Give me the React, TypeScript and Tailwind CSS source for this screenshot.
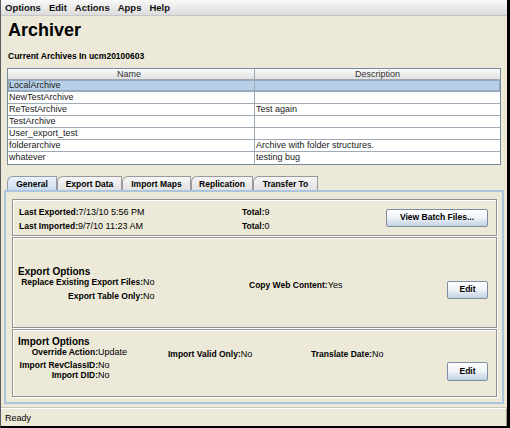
export default function App() {
  const rows: [string, string][] = [
    ["LocalArchive", ""],
    ["NewTestArchive", ""],
    ["ReTestArchive", "Test again"],
    ["TestArchive", ""],
    ["User_export_test", ""],
    ["folderarchive", "Archive with folder structures."],
    ["whatever", "testing bug"],
  ];
  const tabs: { label: string; w: string; active?: boolean }[] = [
    { label: "General", w: "w-[50px]", active: true },
    { label: "Export Data", w: "w-[65px]" },
    { label: "Import Maps", w: "w-[69px]" },
    { label: "Replication", w: "w-[62px]" },
    { label: "Transfer To", w: "w-[65px]" },
  ];
  const btn =
    "flex items-center justify-center border border-[#7d8da3] rounded-[2px] bg-linear-to-b from-white via-[#eef2f8] to-[#c3d1e4] text-[8.5px] font-bold leading-none text-black";
  const lbl = "font-bold text-[8.5px]";
  const val = "text-[9px]";

  return (
    <div className="w-[510px] h-[428px] bg-[#ece9d8] border-l border-l-[#5a5a5a] border-r-[3px] border-r-black border-b-2 border-b-black flex flex-col font-['Liberation_Sans',Arial,sans-serif] text-black overflow-hidden">
      {/* Menu bar */}
      <div className="h-[16px] shrink-0 border-b border-[#c6c6c6] bg-linear-to-b from-[#f9f9f9] to-[#dcdcdc] flex items-center gap-[8px] pl-[4px] text-[9.5px] font-bold leading-[15px] text-[#111]">
        <span>Options</span>
        <span>Edit</span>
        <span>Actions</span>
        <span>Apps</span>
        <span>Help</span>
      </div>

      {/* Title */}
      <div className="mt-[4.5px] ml-[7px] text-[18px] font-bold leading-[18px]">Archiver</div>
      <div className="mt-[12.5px] ml-[7px] text-[8.5px] font-bold leading-[10px]">
        Current Archives In ucm20100603
      </div>

      {/* Table */}
      <div className="mt-[7px] ml-[6px] w-[494px] border border-[#7a8a9c] bg-white shrink-0">
        <div className="flex h-[11px] border-b border-[#9ea9b6] bg-linear-to-b from-[#fbfbfb] to-[#e1e1e1] text-[9px] leading-[10px] text-[#333]">
          <div className="w-[247px] border-r border-[#9ea9b6] text-center pr-[4px]">Name</div>
          <div className="flex-1 text-center">Description</div>
        </div>
        {rows.map(([n, d], i) => (
          <div
            key={n}
            className={
              "flex h-[12px] text-[9px] leading-[11px] text-[#1a1a1a] " +
              (i < rows.length - 1 ? "border-b border-[#9ea9b6] " : "") +
              (i === 0 ? "bg-[#b8cfe6] shadow-[inset_0_0_0_1px_#8fa9c6]" : "")
            }
          >
            <div className="w-[247px] border-r border-[#9ea9b6] pl-[1px] whitespace-nowrap overflow-hidden">{n}</div>
            <div className="flex-1 pl-[1px] whitespace-nowrap overflow-hidden">{d}</div>
          </div>
        ))}
      </div>

      {/* Tabs */}
      <div className="mt-[11px] ml-[3px] pl-[3px] flex h-[14px] shrink-0">
        {tabs.map((t) => (
          <div
            key={t.label}
            className={
              t.w +
              " h-[14px] border-t border-l border-r rounded-tl-[6px] text-center text-[8.5px] font-bold leading-[15px] " +
              (t.active
                ? "border-[#8e9bab] bg-linear-to-b from-[#eef3fa] to-[#c9dbef]"
                : "border-[#9a9a9a] bg-linear-to-b from-[#f6f6f6] to-[#e2e2e2]")
            }
          >
            {t.label}
          </div>
        ))}
      </div>

      {/* Panel */}
      <div className="ml-[3px] w-[500px] h-[214px] shrink-0 border-2 border-[#adc4df] pt-[7px] pl-[6px] pr-[5px] pb-[5px] flex flex-col gap-[1px]">
        {/* Section 1 */}
        <div className="h-[37px] shrink-0 border border-[#919191] shadow-[inset_1px_1px_0_#fff,1px_1px_0_#fff] flex items-center pl-[6px] pr-[8px]">
          <div className="w-[223px] flex flex-col leading-[11px] whitespace-nowrap">
            <div>
              <span className={lbl}>Last Exported:</span>
              <span className={val}>7/13/10 5:56 PM</span>
            </div>
            <div>
              <span className={lbl}>Last Imported:</span>
              <span className={val}>9/7/10 11:23 AM</span>
            </div>
          </div>
          <div className="flex-1 flex flex-col leading-[11px] whitespace-nowrap">
            <div>
              <span className={lbl}>Total:</span>
              <span className={val}>9</span>
            </div>
            <div>
              <span className={lbl}>Total:</span>
              <span className={val}>0</span>
            </div>
          </div>
          <div className={btn + " w-[102px] h-[18px]"}>View Batch Files...</div>
        </div>

        {/* Section 2 */}
        <div className="h-[91px] shrink-0 border border-[#919191] shadow-[inset_1px_1px_0_#fff,1px_1px_0_#fff] flex flex-col pt-[28px] pl-[5px] pr-[8px]">
          <div className="text-[10px] font-bold leading-[11px]">Export Options</div>
          <div className="flex items-center">
            <div className="grid grid-cols-[125px_106px_auto] leading-[11px] whitespace-nowrap">
              <div className={lbl + " text-right"}>Replace Existing Export Files:</div>
              <div className={val}>No</div>
              <div>
                <span className={lbl}>Copy Web Content:</span>
                <span className={val}>Yes</span>
              </div>
              <div className={lbl + " text-right"}>Export Table Only:</div>
              <div className={val}>No</div>
              <div></div>
            </div>
            <div className={btn + " ml-auto w-[41px] h-[18px]"}>Edit</div>
          </div>
        </div>

        {/* Section 3 */}
        <div className="h-[68px] shrink-0 border border-[#919191] shadow-[inset_1px_1px_0_#fff,1px_1px_0_#fff] flex flex-col pt-[6px] pl-[5px] pr-[8px]">
          <div className="text-[10px] font-bold leading-[11px]">Import Options</div>
          <div className="flex items-end">
            <div className="grid grid-cols-[80px_70px_143px_auto] leading-[10.5px] whitespace-nowrap">
              <div className={lbl + " text-right"}>Override Action:</div>
              <div className={val}>Update</div>
              <div>
                <span className={lbl}>Import Valid Only:</span>
                <span className={val}>No</span>
              </div>
              <div>
                <span className={lbl}>Translate Date:</span>
                <span className={val}>No</span>
              </div>
              <div className={lbl + " text-right"}>Import RevClassID:</div>
              <div className={val}>No</div>
              <div></div>
              <div></div>
              <div className={lbl + " text-right"}>Import DID:</div>
              <div className={val}>No</div>
              <div></div>
              <div></div>
            </div>
            <div className={btn + " ml-auto w-[41px] h-[19px]"}>Edit</div>
          </div>
        </div>
      </div>

      {/* Status bar */}
      <div className="mt-[4px] h-[19px] shrink-0 border-t border-t-white border-r border-r-[#9d9b90] shadow-[0_-1px_0_#c9c6b8] pl-[4px] text-[9px] leading-[18px]">
        Ready
      </div>
    </div>
  );
}
